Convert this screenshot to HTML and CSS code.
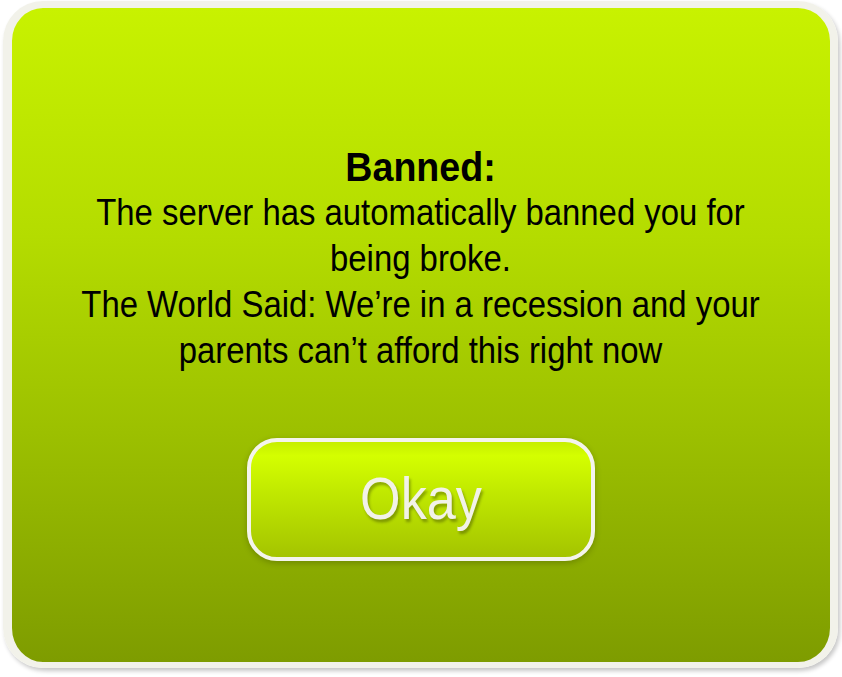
FILE: index.html
```html
<!DOCTYPE html>
<html>
<head>
<meta charset="utf-8">
<link rel="stylesheet" href="styles.css">
</head>
<body>
<div class="frame">
  <div class="message">
    <div class="title">Banned:</div>
    <p class="body">The server has automatically banned you for<br>being broke.<br>The World Said: We’re in a recession and your<br>parents can’t afford this right now</p>
  </div>
  <button class="okay"><span class="okay-label">Okay</span></button>
</div>
</body>
</html>
```
FILE: styles.css
```css
html, body {
  margin: 0;
  padding: 0;
  background: #ffffff;
}
body {
  width: 842px;
  height: 677px;
  overflow: hidden;
}
.frame {
  box-sizing: border-box;
  margin: 1px 0 0 3px;
  width: 835px;
  height: 667px;
  border-style: solid;
  border-color: #f2f2ea;
  border-width: 7px 8px 6px 9px;
  border-radius: 40px;
  background: linear-gradient(to bottom, #c8f200 0%, #b4dc00 35%, #9cc000 65%, #7e9c00 100%);
  box-shadow: 2px 3px 4px rgba(0,0,0,0.22);
  display: flex;
  flex-direction: column;
  align-items: center;
  padding-top: 136px;
  font-family: "Liberation Sans", Arial, sans-serif;
  color: #000;
}
.message {
  text-align: center;
  line-height: 46px;
}
.title {
  font-weight: bold;
  font-size: 40px;
  transform: scaleX(0.94);
}
.body {
  margin: 0;
  font-size: 36px;
  transform: scaleX(0.913);
  white-space: nowrap;
}
.okay {
  box-sizing: border-box;
  margin-top: 64px;
  width: 348px;
  height: 123px;
  border: 4px solid #f4f4ec;
  border-radius: 30px;
  background: linear-gradient(to bottom, #c6ee00 0%, #d4ff00 12%, #c0e800 45%, #a4c400 100%);
  box-shadow: 0 2px 6px rgba(0,0,0,0.22);
  display: flex;
  align-items: center;
  justify-content: center;
  padding: 0;
  font-family: "Liberation Sans", Arial, sans-serif;
  font-size: 60px;
  color: #f2f2e8;
}
.okay-label {
  display: inline-block;
  transform: scaleX(0.87);
  text-shadow: 2px 3px 3px rgba(0,0,0,0.3);
  margin-top: -2px;
}
```
